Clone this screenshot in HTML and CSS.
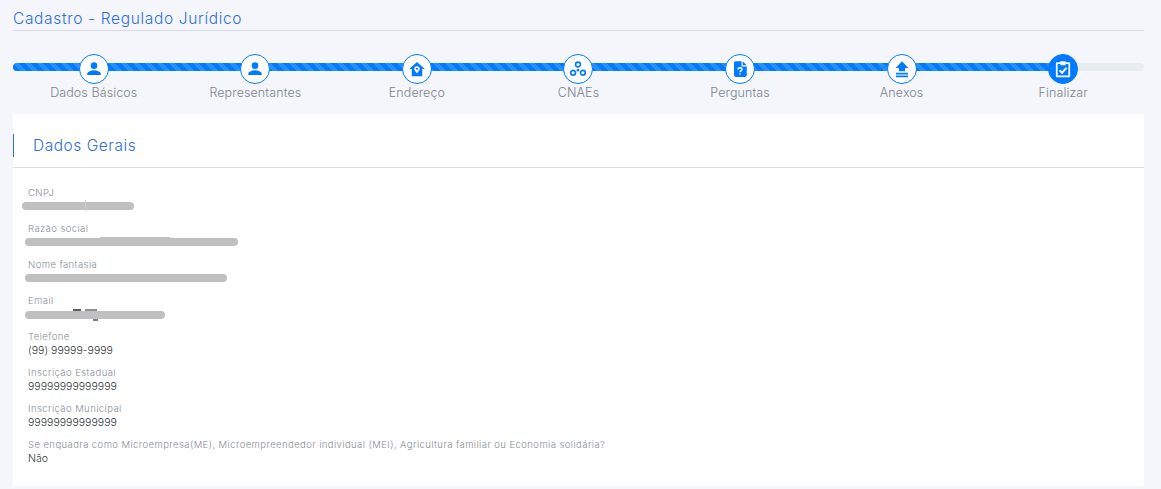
FILE: index.html
```html
<!DOCTYPE html>
<html lang="pt-BR">
<head>
<meta charset="utf-8">
<title>Cadastro - Regulado Jurídico</title>
<link rel="stylesheet" href="styles.css">
</head>
<body>
<main class="page">
  <h1 class="page-title">Cadastro - Regulado Jurídico</h1>
  <div class="stepper">
    <div class="track"><div class="track-fill" style="width:92.86%"></div></div>
    <ol class="steps">
      <li class="step">
        <span class="step-circle"><svg viewBox="0 0 24 24" class="icon"><circle cx="12" cy="7.500" r="4.400"/><path d="M3 20v-1.600c0-3.200 5.600-4.800 9-4.800s9 1.600 9 4.800V20z"/></svg></span>
        <span class="step-label">Dados Básicos</span>
      </li>
      <li class="step">
        <span class="step-circle"><svg viewBox="0 0 24 24" class="icon"><circle cx="12" cy="7.500" r="4.400"/><path d="M3 20v-1.600c0-3.200 5.600-4.800 9-4.800s9 1.600 9 4.800V20z"/></svg></span>
        <span class="step-label">Representantes</span>
      </li>
      <li class="step">
        <span class="step-circle"><svg viewBox="0 0 24 24" class="icon"><path fill-rule="evenodd" d="M12 2.500 1.500 12H5v9.500h14V12h3.500zM12 8.200a3.600 3.600 0 0 1 3.600 3.600c0 2.400-3.600 6-3.600 6s-3.600-3.600-3.600-6A3.600 3.600 0 0 1 12 8.200zm0 2.200a1.400 1.400 0 1 0 0 2.800 1.400 1.400 0 0 0 0-2.800z"/></svg></span>
        <span class="step-label">Endereço</span>
      </li>
      <li class="step">
        <span class="step-circle"><svg viewBox="0 0 24 24" class="icon"><g class="rings"><circle cx="12" cy="6" r="3.200"/><circle cx="5.500" cy="17" r="3.200"/><circle cx="18.500" cy="17" r="3.200"/></g><circle cx="12" cy="13.500" r="1.700"/></svg></span>
        <span class="step-label">CNAEs</span>
      </li>
      <li class="step">
        <span class="step-circle"><svg viewBox="0 0 24 24" class="icon"><path d="M6 1.500h8v7h7V20a2.500 2.500 0 0 1-2.500 2.500h-12A2.500 2.500 0 0 1 4 20V3.500A2 2 0 0 1 6 1.500zM15.500 1.500l5.500 5.500h-5.500z"/><path class="glyph" d="M9.500 12.500c0-3 5-3 5 0 0 2-2.500 1.800-2.500 3.700"/><circle class="dot" cx="12" cy="18.800" r="1"/></svg></span>
        <span class="step-label">Perguntas</span>
      </li>
      <li class="step">
        <span class="step-circle"><svg viewBox="0 0 24 24" class="icon"><path d="M12 1.500 3.500 10.500H8V15h8v-4.500h4.500zM4 17h16v2.200H4zM4 20.800h16V23H4z"/></svg></span>
        <span class="step-label">Anexos</span>
      </li>
      <li class="step step-current">
        <span class="step-circle"><svg viewBox="0 0 24 24" class="icon"><path fill-rule="evenodd" d="M8.500 3V1.500h7V3H20a1.500 1.500 0 0 1 1.500 1.500v17A1.500 1.500 0 0 1 20 23H4a1.500 1.500 0 0 1-1.500-1.500v-17A1.500 1.500 0 0 1 4 3zM4.800 5.300v15.400h14.400V5.300h-3.700V7h-7V5.300z"/><path class="glyph-thick" d="m7.500 13.800 3.200 3.200 6-6.500"/></svg></span>
        <span class="step-label">Finalizar</span>
      </li>
    </ol>
  </div>
  <section class="card">
    <header class="card-header"><h2 class="card-title">Dados Gerais</h2></header>
    <dl class="fields">
      <div class="field"><dt>CNPJ</dt><dd><span class="mask mask-cnpj"></span></dd></div>
      <div class="field"><dt>Razão social</dt><dd><span class="mask mask-razao"></span></dd></div>
      <div class="field"><dt>Nome fantasia</dt><dd><span class="mask mask-nome"></span></dd></div>
      <div class="field"><dt>Email</dt><dd><span class="mask mask-email"></span></dd></div>
      <div class="field"><dt>Telefone</dt><dd>(99) 99999-9999</dd></div>
      <div class="field"><dt>Inscrição Estadual</dt><dd>99999999999999</dd></div>
      <div class="field"><dt>Inscrição Municipal</dt><dd>99999999999999</dd></div>
      <div class="field"><dt>Se enquadra como Microempresa(ME), Microempreendedor individual (MEI), Agricultura familiar ou Economia solidária?</dt><dd>Não</dd></div>
    </dl>
  </section>
</main>
</body>
</html>
```

FILE: styles.css
```css
* { box-sizing: border-box; }
html, body { margin: 0; padding: 0; }
body {
  background: #f4f6fb;
  font-family: Inter, "Open Sans", sans-serif;
  color: #495057;
}
.page { padding: 0 17px 3px 13px; }
.page-title {
  margin: 0;
  height: 31px;
  padding-top: 9px;
  border-bottom: 1px solid #d9dce3;
  font-size: 15.5px;
  line-height: 20px;
  font-weight: 300;
  letter-spacing: .66px;
  color: #2f6fdc;
}
.stepper {
  display: grid;
  margin-top: 23px;
  height: 60px;
}
.track, .steps { grid-area: 1 / 1; }
.track {
  margin-top: 9px;
  height: 8px;
  border-radius: 4px;
  background: #e9ecef;
  overflow: hidden;
}
.track-fill {
  height: 100%;
  background-color: #007bff;
  background-image: linear-gradient(45deg, rgba(255,255,255,.15) 25%, transparent 25%, transparent 50%, rgba(255,255,255,.15) 50%, rgba(255,255,255,.15) 75%, transparent 75%, transparent);
  background-size: 12px 12px;
}
.steps {
  display: grid;
  grid-template-columns: repeat(7, 1fr);
  margin: 0;
  padding: 0;
  list-style: none;
}
.step {
  display: flex;
  flex-direction: column;
  align-items: center;
}
.step-circle {
  display: flex;
  align-items: center;
  justify-content: center;
  width: 30px;
  height: 30px;
  border: 1.5px solid #007bff;
  border-radius: 50%;
  background: #fff;
}
.icon { width: 18px; height: 18px; fill: #007bff; }
.rings circle { fill: none; stroke: #007bff; stroke-width: 2.200; }
.glyph { fill: none; stroke: #fff; stroke-width: 2; }
.dot { fill: #fff; }
.glyph-thick { fill: none; stroke: #fff; stroke-width: 2.600; }
.step-current .step-circle { background: #007bff; }
.step-current .icon { fill: #fff; }
.step-label {
  margin-top: 1px;
  font-size: 12.5px;
  line-height: 16px;
  font-weight: 300;
  letter-spacing: .1px;
  color: #7c848c;
}
.card {
  background: #fff;
  height: 372px;
}
.card-header {
  display: flex;
  align-items: center;
  height: 54px;
  padding-top: 9px;
  padding-bottom: 0;
  border-bottom: 1px solid #dddfe3;
}
.card-title {
  margin: 0;
  height: 23px;
  padding-left: 19px;
  border-left: 1px solid #2f6fdc;
  font-size: 15.5px;
  line-height: 23px;
  font-weight: 300;
  letter-spacing: .54px;
  color: #2f6fdc;
}
.fields {
  margin: 0;
  padding: 18px 15px 0;
}
.field { height: 36px; }
.field dt {
  font-size: 9.5px;
  line-height: 13px;
  font-weight: 300;
  letter-spacing: .42px;
  color: #858c94;
}
.field dd {
  display: flex;
  margin: 0;
  height: 15px;
  padding-top: 1px;
  font-size: 10.5px;
  line-height: 13px;
  font-weight: 300;
  letter-spacing: .03px;
  color: #343a40;
}
.mask {
  position: relative;
  display: block;
  height: 8px;
  margin-top: 2px;
  border-radius: 4px;
  background: #c0c0c0;
}
.mask-cnpj { width: 112px; margin-left: -6px; }
.mask-cnpj::before {
  content: "";
  position: absolute;
  left: 63px;
  top: -2px;
  width: 1px;
  height: 11px;
  background: #d8c9bf;
}
.mask-razao { width: 213px; margin-left: -3px; }
.mask-razao::before {
  content: "";
  position: absolute;
  left: 75px;
  top: -1px;
  width: 70px;
  height: 1px;
  background: #c0c0c0;
}
.mask-nome { width: 202px; margin-left: -3px; }
.mask-email { width: 140px; margin-left: -3px; margin-top: 3px; }
.mask-email::before {
  content: "";
  position: absolute;
  left: 48px;
  top: -2px;
  width: 24px;
  height: 2px;
  background: linear-gradient(90deg, #5a6066 0 8px, transparent 8px 12px, #8a9096 12px 24px);
}
.mask-email::after {
  content: "";
  position: absolute;
  left: 68px;
  bottom: -2px;
  width: 5px;
  height: 2px;
  background: #7a8086;
}
```
